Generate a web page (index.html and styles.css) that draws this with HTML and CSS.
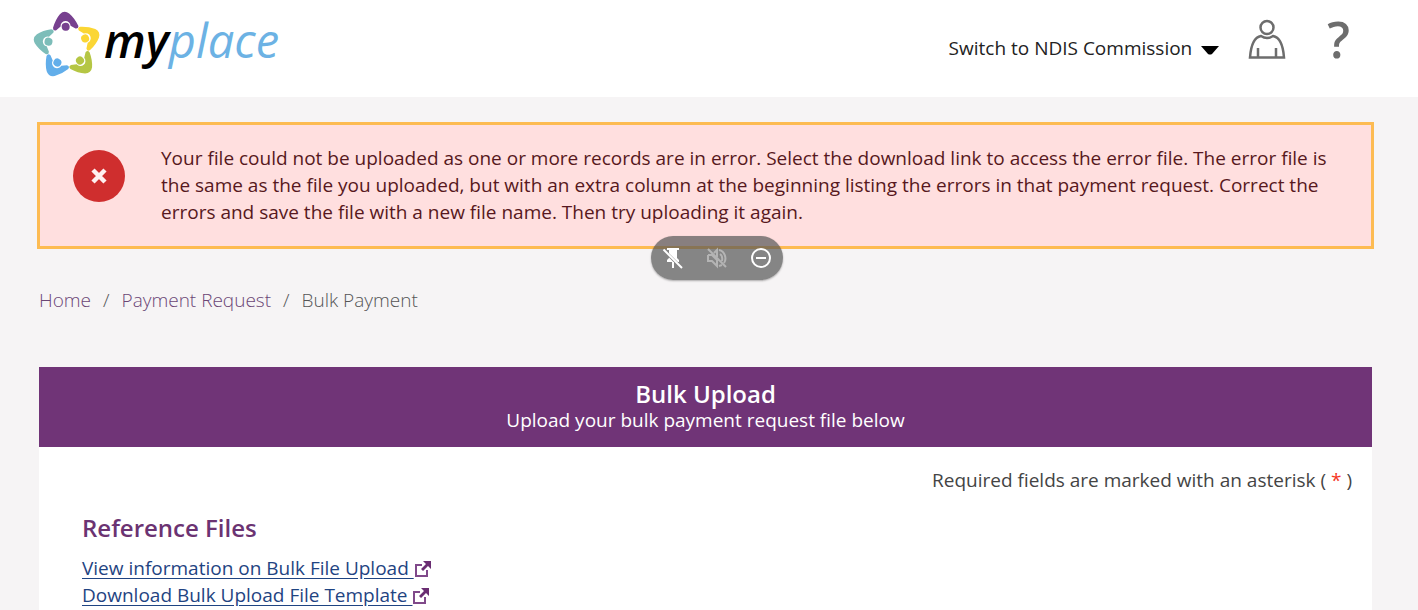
FILE: index.html
```
<!DOCTYPE html>
<html lang="en">
<head>
    <meta charset="UTF-8">
    <meta name="viewport" content="width=device-width, initial-scale=1.0">
    <title>myplace - Bulk Upload</title>
    <link rel="stylesheet" href="styles.css">
</head>
<body>
    <header class="site-header">
        <a class="logo" href="#" aria-label="myplace">
            <svg class="logo-mark" viewBox="0 0 210 210" aria-hidden="true">
                <defs>
                    <g id="person">
                        <path d="M-38 -58 Q-29 -82 -14 -97 Q0 -109 14 -97 Q29 -82 38 -58 Q39 -48 29 -50 L15 -60 A15 15 0 0 0 -15 -60 L-29 -50 Q-39 -48 -38 -58 Z"/>
                        <circle cx="0" cy="-58" r="12"/>
                    </g>
                </defs>
                <g transform="translate(106 108) rotate(-5)">
                    <use href="#person" fill="#77408f"/>
                    <use href="#person" fill="#fbd634" transform="rotate(72)"/>
                    <use href="#person" fill="#b5c644" transform="rotate(144)"/>
                    <use href="#person" fill="#62aeea" transform="rotate(216)"/>
                    <use href="#person" fill="#7dbdb9" transform="rotate(288)"/>
                </g>
            </svg>
            <span class="logo-text"><b>my</b>place</span>
        </a>
        <nav class="header-nav">
            <button class="switch" type="button">Switch to NDIS Commission
                <svg width="18" height="9" viewBox="0 0 18 9" aria-hidden="true"><path d="M0 0h18L11 8q-2 1-4 0z"/></svg>
            </button>
            <button class="icon-btn" type="button" aria-label="Profile">
                <svg width="38" height="42" viewBox="0 0 38 42" fill="none" stroke="#6d6d6d" stroke-width="2.500">
                    <circle cx="19" cy="8.500" r="6.500"/>
                    <path d="M13 17C7 18 3 25 2 38.500H36C35 25 31 18 25 17Q19 21 13 17ZM10 38V29M28 38V29"/>
                </svg>
            </button>
            <button class="icon-btn help" type="button" aria-label="Help">?</button>
        </nav>
    </header>

    <div class="alert" role="alert">
        <svg class="alert-icon" viewBox="0 0 52 52" aria-hidden="true">
            <circle cx="26" cy="26" r="26" fill="#cf2e2e"/>
            <path d="M20 20L32 32M32 20L20 32" stroke="#fff0f0" stroke-width="4.500"/>
        </svg>
        <p>Your file could not be uploaded as one or more records are in error. Select the download link to access the error file. The error file is the same as the file you uploaded, but with an extra column at the beginning listing the errors in that payment request. Correct the errors and save the file with a new file name. Then try uploading it again.</p>
        <div class="pill">
            <button type="button" aria-label="Unpin">
                <svg viewBox="0 0 24 24" fill="#fff"><path d="M6 2h12v2h-2v8l2 2v2h-1.200L8 7.200V4H6zM8 11.500L12.500 16H13v6h-2v-6H6v-2l2-2z"/><path d="M2.500 3.500L21 22" stroke="#fff" stroke-width="2"/></svg>
            </button>
            <button type="button" aria-label="Mute" disabled>
                <svg viewBox="0 0 24 24" fill="none" stroke="#b4b4b4" stroke-width="2"><path d="M3 9v6h4l5 5V14M3 9h4l5 5M9 7l3-3v7M15 8q3 2 2 7M14 4c6 1 8 9 5 13M14 20l3-1M3 3l18 18"/></svg>
            </button>
            <button type="button" aria-label="Minimise">
                <svg viewBox="0 0 24 24" fill="none" stroke="#fff" stroke-width="2"><circle cx="12" cy="12" r="9"/><path d="M7 12h10"/></svg>
            </button>
        </div>
    </div>

    <nav class="breadcrumb" aria-label="Breadcrumb">
        <a href="#">Home</a>
        <span class="sep">/</span>
        <a href="#">Payment Request</a>
        <span class="sep">/</span>
        <span class="current">Bulk Payment</span>
    </nav>

    <main class="panel">
        <div class="panel-head">
            <h1>Bulk Upload</h1>
            <p>Upload your bulk payment request file below</p>
        </div>
        <div class="panel-body">
            <p class="required">Required fields are marked with an asterisk ( <span>*</span> )</p>
            <h2>Reference Files</h2>
            <ul class="files">
                <li><a href="#">View information on Bulk File Upload </a><svg class="ext" viewBox="0 0 18 18" aria-hidden="true"><path d="M8 5H2v11h11v-6" fill="none" stroke="#80498a" stroke-width="2"/><path d="M9 1h8v8l-3-3-5 5-2-2 5-5z" fill="#6a2d72"/></svg></li>
                <li><a href="#">Download Bulk Upload File Template </a><svg class="ext" viewBox="0 0 18 18" aria-hidden="true"><path d="M8 5H2v11h11v-6" fill="none" stroke="#80498a" stroke-width="2"/><path d="M9 1h8v8l-3-3-5 5-2-2 5-5z" fill="#6a2d72"/></svg></li>
            </ul>
        </div>
    </main>
</body>
</html>
```

FILE: styles.css
```
* {
    box-sizing: border-box;
}
body {
    margin: 0;
    background-color: #f6f4f5;
    color: #444;
    font-family: "Open Sans", "Noto Sans", sans-serif;
    font-size: 19px;
    line-height: 27px;
}
h1, h2, p, ul {
    margin: 0;
    padding: 0;
}
button {
    padding: 0;
    border: none;
    background: none;
    color: inherit;
    font: inherit;
    cursor: pointer;
}
svg {
    display: block;
}
.site-header {
    display: flex;
    justify-content: space-between;
    height: 97px;
    padding: 10px 68px 0 32px;
    background-color: #fff;
}
.logo {
    display: flex;
    align-items: flex-start;
    gap: 2px;
    color: #6cb2e4;
    text-decoration: none;
}
.logo-mark {
    width: 70px;
    height: 70px;
}
.logo-text {
    font-size: 47px;
    font-style: italic;
    line-height: 60px;
}
.logo-text b {
    color: #000;
    font-weight: 600;
}
.header-nav {
    display: flex;
    align-items: flex-start;
    padding-top: 9px;
}
.switch {
    display: flex;
    align-items: center;
    gap: 9px;
    margin: 16px 29px 0 0;
    color: #222;
}
.switch svg {
    margin-top: 4px;
}
.help {
    margin-left: 41px;
    color: #6d6d6d;
    font-size: 50px;
    font-weight: 600;
    line-height: 40px;
}
.alert {
    position: relative;
    display: flex;
    gap: 36px;
    margin: 25px 44px 0 37px;
    padding: 20px 40px 20px 33px;
    border: 3px solid #fdbb52;
    background-color: #ffdfdf;
    color: #571820;
}
.alert-icon {
    flex: none;
    width: 52px;
    height: 52px;
    margin-top: 5px;
}
/* floating screen share controls */
.pill {
    position: absolute;
    left: 50%;
    bottom: -34px;
    display: flex;
    justify-content: space-between;
    width: 132px;
    margin-left: 11px;
    padding: 10px;
    border-radius: 22px;
    background-color: rgba(85, 85, 85, 0.7);
    box-shadow: 0 1px 2px rgba(0, 0, 0, 0.3);
    transform: translateX(-50%);
}
.pill svg {
    width: 24px;
    height: 24px;
}
.breadcrumb {
    display: flex;
    gap: 12px;
    padding: 38px 39px 53px;
    color: #555;
    font-weight: 300;
}
.breadcrumb a {
    color: #6b4675;
    text-decoration: none;
}
.panel {
    margin: 0 46px 0 39px;
    background-color: #fff;
}
.panel-head {
    padding: 13px 0;
    background-color: #703477;
    color: #fff;
    text-align: center;
}
h1, h2 {
    font-size: 24px;
    font-weight: 600;
    line-height: 27px;
}
.panel-body {
    padding: 20px 20px 20px 43px;
}
.required {
    text-align: right;
}
.required span {
    color: #f5361f;
}
h2 {
    margin: 20px 0 14px;
    color: #6b3372;
}
.files {
    list-style: none;
}
.files li {
    display: flex;
    align-items: center;
}
.files a {
    color: #1f4482;
    text-underline-offset: 3px;
    white-space: pre;
}
.ext {
    width: 18px;
    height: 18px;
}
```
